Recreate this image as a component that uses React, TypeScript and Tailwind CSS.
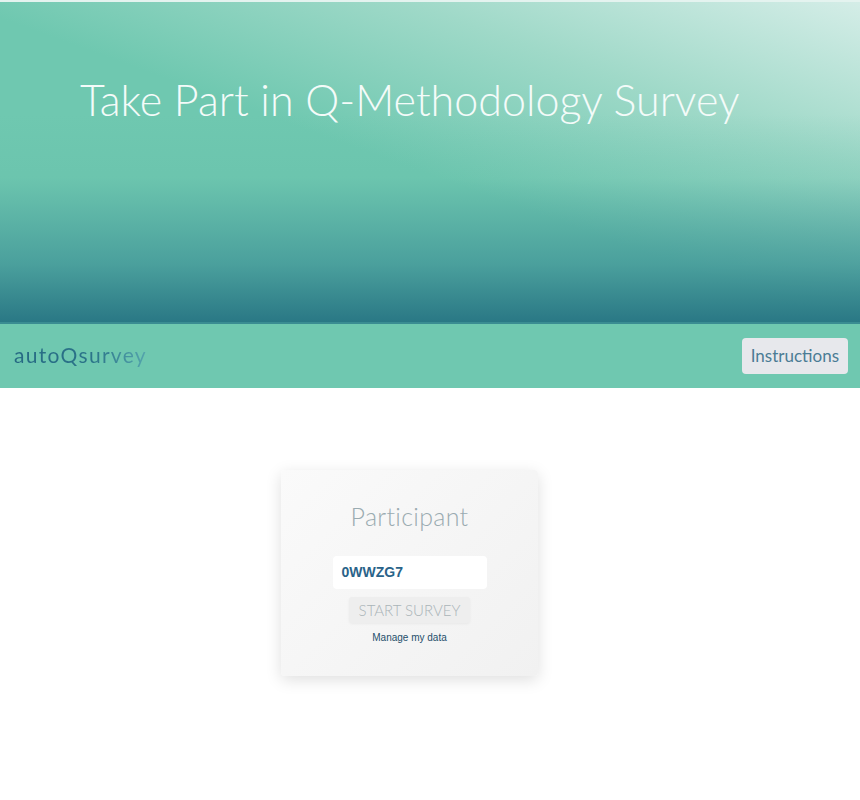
import React from 'react'

export default function App() {
  return (
    <div className="min-h-[800px] bg-white" style={{ fontFamily: 'Lato, "Open Sans", sans-serif' }}>
      <header className="h-[322px] border-t-2 border-[#e4f3ef] bg-[linear-gradient(to_top,#2a7885_0%,rgba(62,146,150,0.75)_18%,rgba(98,187,168,0.25)_45%,rgba(111,200,176,0)_65%),linear-gradient(200deg,#d4ede7_0%,#9fd9c8_26%,#6fc8b0_52%)]">
        <h1 className="pl-[80px] pt-[76px] text-[43px] font-light leading-none text-[#f4fbf9]">
          Take Part in Q-Methodology Survey
        </h1>
      </header>

      <nav className="flex h-[66px] items-center justify-between border-t-2 border-[#3a8c92] bg-[#6fc8b0] pl-[14px] pr-[12px]">
        <span className="bg-[linear-gradient(to_right,#266983_0%,#2b7489_60%,#55a5ad_100%)] bg-clip-text pb-[2px] text-[21px] font-normal tracking-[1.3px] text-transparent">
          autoQsurvey
        </span>
        <button className="h-[36px] rounded-[4px] bg-[#e7e8ec] px-[9px] text-[17px] text-[#4b7c95]">
          Instructions
        </button>
      </nav>

      <main className="pl-[281px] pt-[82px]">
        <div className="flex h-[206px] w-[257px] flex-col items-center rounded-[4px] bg-[linear-gradient(135deg,#fafafa,#f1f1f1)] pt-[34px] shadow-[0_4px_16px_rgba(0,0,0,0.13)]">
          <h2 className="text-[25px] font-light leading-none tracking-[0.3px] text-[#9aabb1]">Participant</h2>
          <div className="mt-[27px] flex h-[33px] w-[154px] items-center rounded-[4px] bg-white pl-[9px] text-[14px] font-bold text-[#2a6389]" style={{ fontFamily: '"Liberation Sans", Arial, sans-serif' }}>
            0WWZG7
          </div>
          <button className="mt-[8px] h-[26px] rounded-[3px] bg-[#eeeeee] px-[10px] text-[15px] font-light text-[#aab4b8] shadow-[0_1px_3px_rgba(0,0,0,0.05)]">
            START SURVEY
          </button>
          <a className="mt-[7px] text-[10px] text-[#1f4f6b]" style={{ fontFamily: '"Liberation Sans", Arial, sans-serif' }}>
            Manage my data
          </a>
        </div>
      </main>
    </div>
  )
}
